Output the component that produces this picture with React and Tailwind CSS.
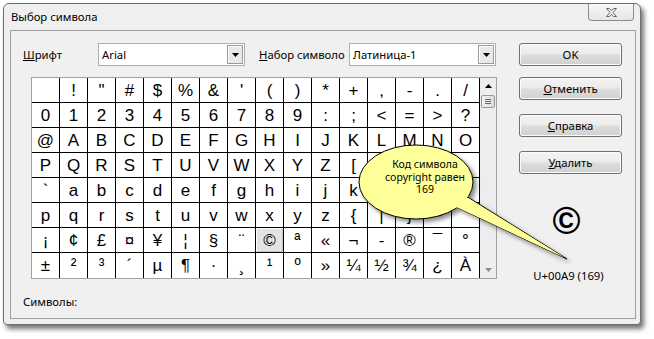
import React from "react";

const ui = "font-['Noto_Sans',sans-serif] text-[11.3px] leading-[16px] text-black whitespace-nowrap";
const btn =
  "h-[23px] w-[103px] border border-[#707070] rounded-[3px] bg-[linear-gradient(to_bottom,#f4f4f4_0%,#ebebeb_48%,#dddddd_52%,#d0d0d0_100%)] shadow-[inset_0_0_0_1px_#fbfbfb] flex items-center justify-center";

function Select({ value }) {
  return (
    <div className="h-[23px] w-[147px] border border-[#abadb3] bg-white flex items-center justify-between">
      <span className="pl-[3px] font-['Noto_Sans',sans-serif] text-[11.3px] leading-[16px] text-black whitespace-nowrap">{value}</span>
      <div className="mr-px h-[19px] w-[16px] border border-[#9a9a9a] bg-[#e8e8e8] shadow-[inset_1px_1px_0_#ffffff] flex items-center justify-center">
        <svg width="7" height="4" viewBox="0 0 7 4">
          <path d="M0 0H7L3.5 4Z" fill="#000" />
        </svg>
      </div>
    </div>
  );
}

export default function App() {
  const chars = [];
  for (let c = 0x20; c <= 0x7e; c++) chars.push(String.fromCharCode(c));
  for (let c = 0xa0; c <= 0xc0; c++)
    chars.push(c === 0xa0 ? "" : c === 0xad ? "-" : String.fromCharCode(c));

  return (
    <div className="relative w-[654px] h-[339px] bg-white overflow-hidden">
      <div className="ml-[3px] mt-[3px] w-[638px] h-[322px] border border-[#6e6e6e] rounded-t-[6px] rounded-b-[4px] bg-[#efefef] shadow-[3px_4px_5px_rgba(0,0,0,0.55)] flex flex-col">
        <div className="h-[26px] flex items-start justify-between pl-[7px]">
          <span className={`${ui} mt-[5px]`}>Выбор символа</span>
          <div className="mr-[6px] w-[46px] h-[17px] border border-t-0 border-[#8c8c8c] rounded-b-[4px] bg-[linear-gradient(to_bottom,#f7f7f7,#e6e6e6)] flex items-center justify-center">
            <svg width="13" height="11" viewBox="0 0 13 11">
              <path
                d="M1.5 1.5H4.5L6.5 3.8L8.5 1.5H11.5L8 5.5L11.5 9.5H8.5L6.5 7.2L4.5 9.5H1.5L5 5.5Z"
                fill="#f2f2f2"
                stroke="#6a6a6a"
                strokeWidth="1"
                strokeLinejoin="round"
              />
            </svg>
          </div>
        </div>
        <div className="ml-[6px] w-[626px] h-[289px] border border-[#a0a0a0] bg-[#f0f0f0] flex pl-[12px] pt-[12px]">
          <div className="w-[474px] flex flex-col">
            <div className="h-[23px] flex items-center">
              <span className={`${ui} w-[75px]`}>
                <span className="underline">Ш</span>рифт
              </span>
              <Select value="Arial" />
              <span className={`${ui} ml-[14px] w-[90px]`}>
                <span className="underline">Н</span>абор символо
              </span>
              <Select value="Латиница-1" />
            </div>
            <div className="mt-[11px] ml-[8px] w-[466px] border border-[#a0a0a0] bg-white flex">
              <div className="grid grid-cols-[repeat(16,28px)]">
                {chars.map((ch, i) => {
                  const row = Math.floor(i / 16);
                  const sel = i === 104;
                  return (
                    <div
                      key={i}
                      className={`h-[25px] w-[28px] border-r border-black ${row < 7 ? "border-b" : ""} ${
                        sel ? "bg-[#e3e3e3] shadow-[inset_1px_1px_0_#ffffff,inset_-1px_-1px_0_#c8c8c8]" : ""
                      } flex items-center justify-center font-['Liberation_Sans',sans-serif] text-[17px] leading-none text-black`}
                    >
                      {ch}
                    </div>
                  );
                })}
              </div>
              <div className="w-[16px] bg-[#ededed] flex flex-col items-center">
                <div className="h-[16px] flex items-center justify-center">
                  <svg width="7" height="4" viewBox="0 0 7 4">
                    <path d="M0 4H7L3.5 0Z" fill="#000" />
                  </svg>
                </div>
                <div className="mt-[1px] h-[13px] w-[14px] border border-[#989898] rounded-[2px] bg-[linear-gradient(to_right,#f2f2f2,#dcdcdc)] flex flex-col items-center justify-center gap-[1px]">
                  <div className="h-px w-[6px] bg-[#6a6a6a]" />
                  <div className="h-px w-[6px] bg-[#6a6a6a]" />
                  <div className="h-px w-[6px] bg-[#6a6a6a]" />
                </div>
                <div className="flex-1" />
                <div className="h-[16px] flex items-center justify-center">
                  <svg width="7" height="4" viewBox="0 0 7 4">
                    <path d="M0 0H7L3.5 4Z" fill="#8a8a8a" />
                  </svg>
                </div>
              </div>
            </div>
            <span className={`${ui} mt-[15px]`}>Символы:</span>
          </div>
          <div className="ml-[22px] w-[103px] flex flex-col items-center">
            <div className={btn}>
              <span className={ui}>OK</span>
            </div>
            <div className={`${btn} mt-[11px]`}>
              <span className={ui}>
                <span className="underline">О</span>тменить
              </span>
            </div>
            <div className={`${btn} mt-[14px]`}>
              <span className={ui}>
                <span className="underline">С</span>правка
              </span>
            </div>
            <div className={`${btn} mt-[14px]`}>
              <span className={ui}>
                <span className="underline">У</span>далить
              </span>
            </div>
            <div className="mt-[27px] pr-[8px] font-['Liberation_Sans',sans-serif] font-bold text-[38px] leading-[40px] text-black">
              ©
            </div>
            <span className={`${ui} mt-[27px] pr-[4px]`}>U+00A9 (169)</span>
          </div>
        </div>
      </div>

      <svg className="absolute left-0 top-0 pointer-events-none" width="654" height="339" viewBox="0 0 654 339">
        <defs>
          <filter id="sh" x="-20%" y="-20%" width="140%" height="140%">
            <feDropShadow dx="3" dy="3" stdDeviation="2" floodColor="#000" floodOpacity="0.45" />
          </filter>
        </defs>
        <g filter="url(#sh)">
          <path d="M466 196L567 259L450 204Z" fill="#ffff99" stroke="#000" strokeWidth="1" />
          <ellipse cx="416" cy="182" rx="57" ry="37" fill="#ffff99" stroke="#000" strokeWidth="1" />
          <path d="M465.5 196.5L565 258L451 204.5Z" fill="#ffff99" />
        </g>
        <g fontFamily="'Noto Sans', sans-serif" fontSize="10.5" fill="#000" textAnchor="middle">
          <text x="425" y="168">Код символа</text>
          <text x="425" y="181">copyright равен</text>
          <text x="425" y="193">169</text>
        </g>
      </svg>
    </div>
  );
}
